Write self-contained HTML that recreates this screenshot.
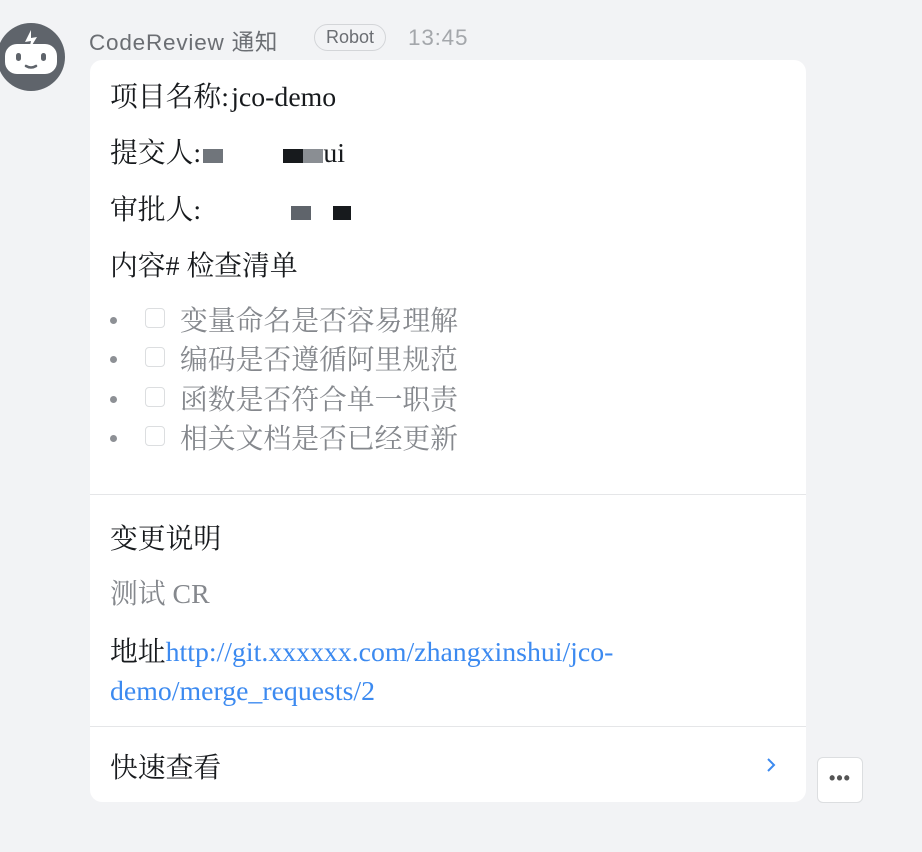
<!DOCTYPE html>
<html><head><meta charset="utf-8"><style>
body{margin:0;width:922px;height:852px;background:#f2f3f5;position:relative;overflow:hidden;font-family:"Liberation Serif","Noto Serif CJK SC",serif;color:#171a1d}
.a{position:absolute}
.hd{font-family:"Liberation Sans","Noto Sans CJK SC",sans-serif;color:#6b6e73;font-size:22.5px;letter-spacing:0.8px}
.card{left:90px;top:60px;width:716px;height:742px;background:#fff;border-radius:12px}
.t{position:absolute;left:20px;font-size:27.8px;white-space:nowrap;line-height:32px}
.li{color:#85888d}
.dot{position:absolute;left:20px;width:7px;height:7px;border-radius:50%;background:#8d9095}
.cb{position:absolute;left:55px;width:20px;height:20px;border:1px solid #dcdee0;border-radius:4px;box-sizing:border-box}
.hr{position:absolute;left:0;width:716px;height:1px;background:#e5e6e8}
.blk{display:inline-block;height:14px;vertical-align:middle}
.c{display:inline-block;width:10px}
</style></head><body>
<svg class="a" style="left:-2px;top:22px" width="68" height="70" viewBox="0 0 68 70">
<circle cx="33" cy="35" r="34" fill="#5f646b"/>
<rect x="7" y="22" width="52" height="30" rx="12" fill="#fff"/>
<path d="M33 8 L27 20 L33 19 L31 28 L39 15 L33 16 Z" fill="#fff"/>
<rect x="18" y="31" width="5" height="8" rx="2.5" fill="#5f646b"/>
<rect x="43" y="31" width="5" height="8" rx="2.5" fill="#5f646b"/>
<path d="M28 44 Q33 47 38 44" stroke="#5f646b" stroke-width="2.5" fill="none" stroke-linecap="round"/>
</svg>
<div class="a hd" style="left:89px;top:25px">CodeReview 通知</div>
<div class="a hd" style="left:314px;top:24px;width:72px;height:27px;border:1px solid #d3d5d8;border-radius:14px;box-sizing:border-box;font-size:18px;text-align:center;line-height:25px;color:#6b6e73;letter-spacing:0">Robot</div>
<div class="a hd" style="left:408px;top:25px;color:#a4a7ab">13:45</div>
<div class="a card">
<div class="t" style="top:22px">项目名称<span class="c">:</span>jco-demo</div>
<div class="t" style="top:78px">提交人<span class="c">:</span><span class="blk" style="width:20px;background:#70757b"></span><span class="blk" style="width:60px"></span><span class="blk" style="width:20px;background:#171a1d"></span><span class="blk" style="width:20px;background:#8a8e93"></span>ui</div>
<div class="t" style="top:135px">审批人<span class="c">:</span><span class="blk" style="width:88px"></span><span class="blk" style="width:20px;background:#5f646b"></span><span class="blk" style="width:22px"></span><span class="blk" style="width:18px;background:#171a1d"></span></div>
<div class="t" style="top:191px">内容# 检查清单</div>
<div class="dot" style="top:257px"></div><div class="cb" style="top:248px"></div><div class="t li" style="left:90px;top:246px">变量命名是否容易理解</div>
<div class="dot" style="top:296px"></div><div class="cb" style="top:287px"></div><div class="t li" style="left:90px;top:285px">编码是否遵循阿里规范</div>
<div class="dot" style="top:336px"></div><div class="cb" style="top:327px"></div><div class="t li" style="left:90px;top:325px">函数是否符合单一职责</div>
<div class="dot" style="top:375px"></div><div class="cb" style="top:366px"></div><div class="t li" style="left:90px;top:364px">相关文档是否已经更新</div>
<div class="hr" style="top:434px"></div>
<div class="t" style="top:464px">变更说明</div>
<div class="t li" style="top:519px">测试 CR</div>
<div class="t" style="top:577px">地址<span style="color:#3c8af0">http://git.xxxxxx.com/zhangxinshui/jco-</span></div>
<div class="t" style="top:616px;color:#3c8af0">demo/merge_requests/2</div>
<div class="hr" style="top:666px"></div>
<div class="t" style="top:693px">快速查看</div>
<svg class="a" style="left:675px;top:697px" width="12" height="16"><path d="M3 2 L9 8 L3 14" stroke="#3c8af0" stroke-width="2" fill="none"/></svg>
</div>
<div class="a" style="left:817px;top:757px;width:46px;height:46px;background:#fff;border:1px solid #dcdee0;border-radius:6px;box-sizing:border-box;text-align:center;font:bold 18px 'Liberation Sans',sans-serif;line-height:40px;color:#555;letter-spacing:1px">•••</div>
</body></html>
